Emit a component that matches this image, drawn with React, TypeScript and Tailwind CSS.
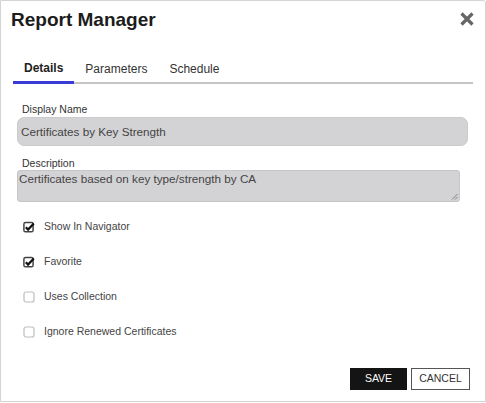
import React from "react"

const font = { fontFamily: '"Liberation Sans", Arial, sans-serif' }

const CheckedBox = () => (
    <svg width="12" height="12" viewBox="0 0 12 12" className="shrink-0">
        <rect x="0.9" y="1.6" width="9.2" height="9.2" rx="1.6" fill="none" stroke="#444" strokeWidth="1.5" />
        <path d="M2.8 6.2 L5.1 8.6 L10.8 2.4" fill="none" stroke="#111" strokeWidth="2.2" strokeLinejoin="miter" />
    </svg>
)

const EmptyBox = () => (
    <svg width="12" height="12" viewBox="0 0 12 12" className="shrink-0">
        <rect x="1" y="1" width="10" height="10" rx="2" fill="#fff" stroke="#bdbdbd" strokeWidth="1.2" />
    </svg>
)

type Option = { label: string, checked: boolean }

const options: Option[] = [
    { label: "Show In Navigator", checked: true },
    { label: "Favorite", checked: true },
    { label: "Uses Collection", checked: false },
    { label: "Ignore Renewed Certificates", checked: false },
]

export default function App() {
    return (
        <div style={font} className="w-[486px] h-[403px] bg-white">
            <div className="w-[486px] h-[402px] border border-[#d4d4d4] rounded-tr-[3px] flex flex-col">
                {/* header */}
                <div className="flex justify-between items-start pl-[10px] pr-[10px] pt-[7px]">
                    <h1 className="text-[19px] leading-[24px] font-bold text-[#1c1c1c]">Report Manager</h1>
                    <svg width="16" height="16" viewBox="0 0 16 16" className="mt-[3px]">
                        <path d="M2.5 2.5 L13.5 13.5 M13.5 2.5 L2.5 13.5" stroke="#666" strokeWidth="3.2" />
                    </svg>
                </div>

                {/* tabs */}
                <div className="ml-[12px] w-[460px] mt-[29px] flex border-b-2 border-[#c6c6c6]">
                    <button className="px-[11px] pb-[6px] text-[12px] leading-[14px] font-bold text-[#222] border-b-[3px] border-[#3a3ad6] -mb-[2px]">Details</button>
                    <button className="px-[11px] pb-[6px] text-[12px] leading-[14px] text-[#333]">Parameters</button>
                    <button className="px-[11px] pb-[6px] text-[12px] leading-[14px] text-[#333]">Schedule</button>
                </div>

                {/* form */}
                <div className="pl-[16px] flex flex-col">
                    <label className="mt-[19px] pl-[5px] text-[10.5px] leading-[13px] text-[#333]">Display Name</label>
                    <div className="mt-[1px] w-[451px] h-[29px] rounded-[7px] bg-[#d3d3d5] border border-[#cbcbcd] flex items-center pl-[3px] text-[11.7px] text-[#444]">
                        Certificates by Key Strength
                    </div>
                    <label className="mt-[11px] pl-[5px] text-[10.5px] leading-[13px] text-[#333]">Description</label>
                    <div className="relative w-[443px] h-[32px] rounded-[3px] bg-[#d3d3d5] border border-[#c6c6c8] pl-[1px] pt-[1px] text-[11.7px] leading-[14px] text-[#444]">
                        Certificates based on key type/strength by CA
                        <svg width="7" height="7" viewBox="0 0 7 7" className="absolute right-[1px] bottom-[1px]">
                            <path d="M1 6.5 L6.5 1 M4 6.5 L6.5 4" stroke="#777" strokeWidth="0.9" />
                        </svg>
                    </div>

                    <div className="mt-[7px] flex flex-col">
                        {options.map(o => (
                            <div key={o.label} className="h-[35px] flex items-center pl-[6px] gap-[9px]">
                                {o.checked ? <CheckedBox /> : <EmptyBox />}
                                <span className="text-[10.5px] text-[#444]">{o.label}</span>
                            </div>
                        ))}
                    </div>
                </div>

                {/* footer */}
                <div className="mt-[19px] flex justify-end gap-[4px] pr-[15px]">
                    <button className="w-[57px] h-[22px] bg-[#141414] text-white text-[10.5px]">SAVE</button>
                    <button className="w-[59px] h-[22px] bg-white border border-[#555] text-[#333] text-[10.5px]">CANCEL</button>
                </div>
            </div>
        </div>
    )
}
